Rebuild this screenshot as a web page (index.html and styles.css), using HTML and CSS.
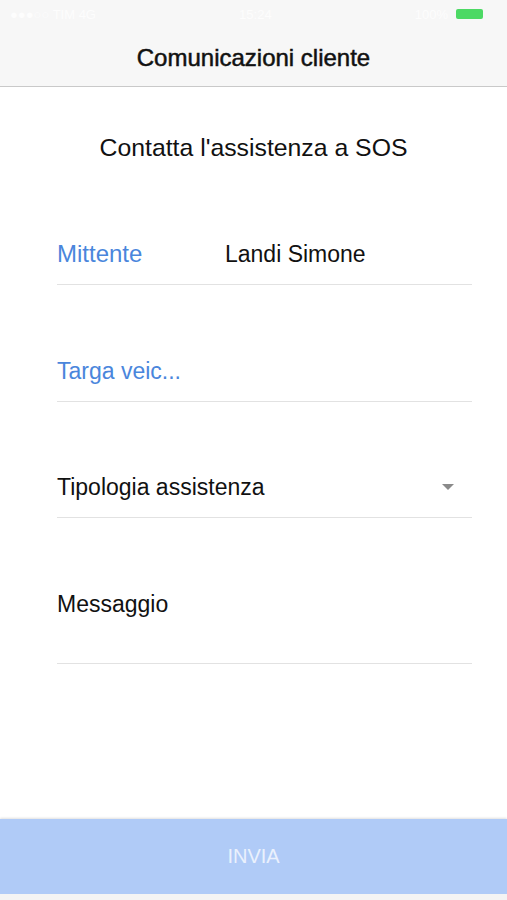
FILE: index.html
```html
<!DOCTYPE html>
<html lang="it">
<head>
  <meta charset="UTF-8" />
  <meta name="viewport" content="width=device-width, initial-scale=1.0" />
  <title>Comunicazioni cliente</title>
  <link rel="stylesheet" href="styles.css">
</head>
<body>
  <div class="top">
    <div class="status">
      <span class="carrier">●●●○○ TIM 4G</span>
      <span class="clock">15:24</span>
      <span class="right">
        <span class="pct">100%</span>
        <span class="battery"></span>
      </span>
    </div>
    <div class="navbar">Comunicazioni cliente</div>
  </div>

  <div class="content">
    <h2 class="intro">Contatta l'assistenza a SOS</h2>

    <div class="field first">
      <span class="label">Mittente</span>
      <span class="value">Landi Simone</span>
    </div>
    <div class="field">
      <span class="label">Targa veic...</span>
    </div>
    <div class="field select">
      <span class="plain">Tipologia assistenza</span>
      <span class="caret"></span>
    </div>
    <div class="field message">
      <span class="plain">Messaggio</span>
    </div>
  </div>

  <button class="send">INVIA</button>
  <div class="bottom"></div>
</body>
</html>
```

FILE: styles.css
```css
body {
  margin: 0;
  height: 900px;
  display: flex;
  flex-direction: column;
  font-family: 'Liberation Sans', Arial, sans-serif;
  color: #111;
  background: white;
}
.top {
  background: #f7f7f7;
  border-bottom: 1px solid #c9c9c9;
  height: 86px;
}
.status {
  height: 28px;
  display: flex;
  align-items: center;
  justify-content: space-between;
  padding: 0 24px 0 10px;
  font-size: 13px;
  color: #fdfdfd;
}
.status .right {
  display: flex;
  align-items: center;
  gap: 8px;
}
.battery {
  width: 27px;
  height: 10px;
  background: #4cd964;
  border-radius: 2px;
}
.navbar {
  height: 58px;
  display: flex;
  align-items: center;
  justify-content: center;
  font-size: 24px;
  -webkit-text-stroke: 0.5px #111;
  padding-top: 2px;
  box-sizing: border-box;
}
.content {
  flex: 1;
  padding: 0 35px 0 57px;
}
.intro {
  margin: 0;
  padding: 47px 0 0 0;
  margin-left: -57px;
  margin-right: -35px;
  text-align: center;
  font-size: 24.8px;
  font-weight: normal;
  line-height: 28px;
}
.field {
  display: flex;
  align-items: center;
  padding: 72px 0 16px 0;
  border-bottom: 1px solid #e2e2e2;
  font-size: 23px;
  line-height: 28px;
}
.field.first {
  padding-top: 78px;
}
.label {
  color: #4a86dc;
  width: 168px;
}
.field.first .label {
  font-size: 24px;
}
.value {
  color: #111;
}
.select {
  padding-top: 71px;
  justify-content: space-between;
}
.caret {
  width: 0;
  height: 0;
  border-left: 6px solid transparent;
  border-right: 6px solid transparent;
  border-top: 6px solid #8a8a8a;
  margin-right: 18px;
}
.message {
  padding-top: 72px;
  padding-bottom: 45px;
}
.send {
  height: 75px;
  border: none;
  background: #b0cbf7;
  color: #eaf1fd;
  font-family: 'Liberation Sans', Arial, sans-serif;
  font-size: 20px;
  box-shadow: 0 -1px 2px rgba(0, 0, 0, 0.12);
  flex-shrink: 0;
}
.bottom {
  height: 6px;
  background: #f4f4f4;
  flex-shrink: 0;
}
```
